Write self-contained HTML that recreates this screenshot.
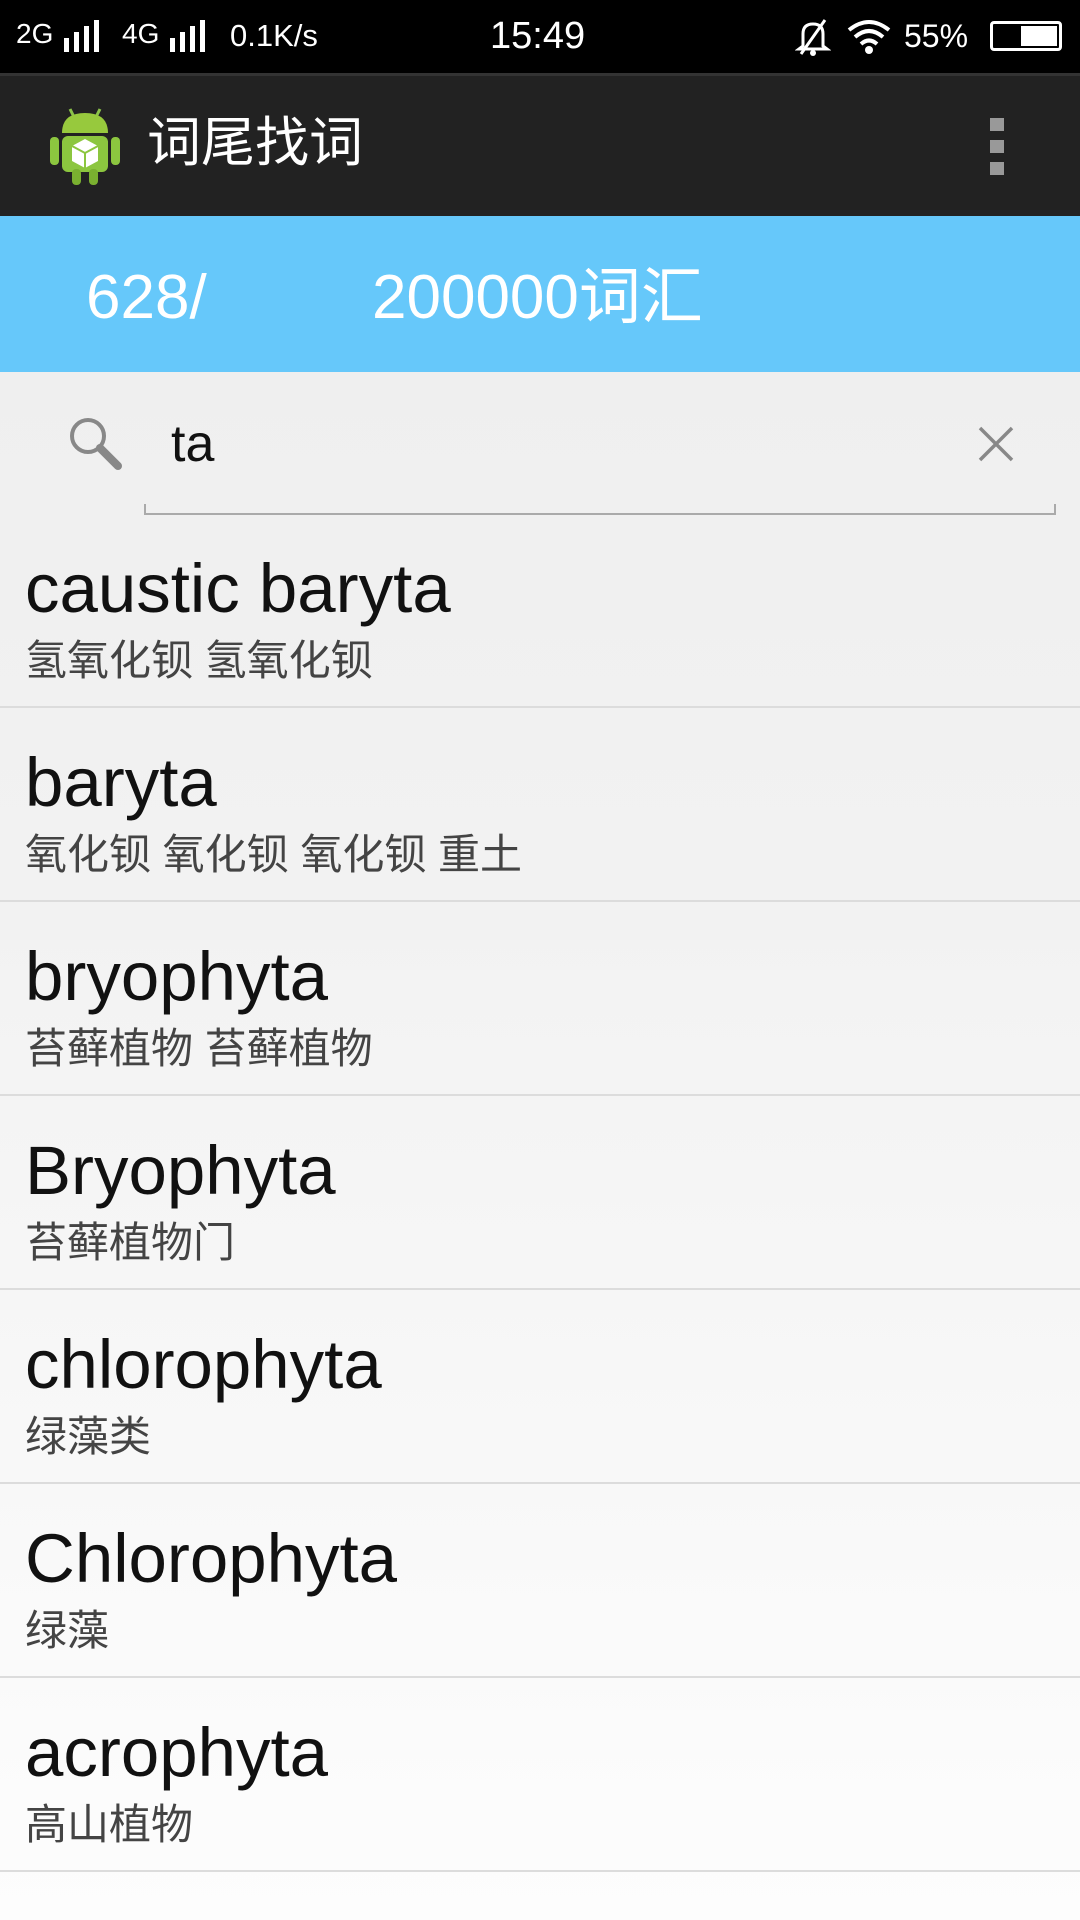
<!DOCTYPE html>
<html><head><meta charset="utf-8"><style>
*{margin:0;padding:0;box-sizing:border-box}
body{width:1080px;height:1920px;overflow:hidden;font-family:"Liberation Sans","Noto Sans CJK SC",sans-serif;background:linear-gradient(#efefef 370px,#f2f2f2 900px,#fdfdfd 1920px);position:relative}
.abs{position:absolute}
.sb{left:0;top:0;width:1080px;height:73px;background:#000;color:#fff;font-size:31px}
.ab{left:0;top:73px;width:1080px;height:143px;background:#222;border-top:3px solid #333}
.blue{left:0;top:216px;width:1080px;height:156px;background:#66c8fa;color:#fff;font-size:62px}
.blue span{line-height:1}
.row{position:absolute;left:0;width:1080px;height:194px;border-bottom:2px solid #dcdcdc}
.w{position:absolute;left:25px;top:40px;font-size:69px;color:#111;line-height:1}
.c{position:absolute;left:25px;top:126px;font-size:42px;color:#444;line-height:1;font-family:"Liberation Sans","Noto Sans CJK SC",sans-serif}
</style></head><body>
<div class="abs sb">
 <span class="abs" style="left:16px;top:18px;font-size:28px">2G</span>
 <svg class="abs" style="left:62px;top:20px" width="44" height="32"><rect x="2" y="18" width="5" height="14" fill="#fff"/><rect x="12" y="12" width="5" height="20" fill="#fff"/><rect x="22" y="6" width="5" height="26" fill="#fff"/><rect x="32" y="0" width="5" height="32" fill="#fff"/></svg>
 <span class="abs" style="left:122px;top:18px;font-size:28px">4G</span>
 <svg class="abs" style="left:168px;top:20px" width="44" height="32"><rect x="2" y="18" width="5" height="14" fill="#fff"/><rect x="12" y="12" width="5" height="20" fill="#fff"/><rect x="22" y="6" width="5" height="26" fill="#fff"/><rect x="32" y="0" width="5" height="32" fill="#fff"/></svg>
 <span class="abs" style="left:230px;top:18px;font-size:31px">0.1K/s</span>
 <span class="abs" style="left:490px;top:15px;font-size:38px">15:49</span>
 <svg class="abs" style="left:795px;top:18px" width="36" height="38"><path d="M8 28 L8 16 Q8 6 18 6 Q28 6 28 16 L28 28 L32 31 L4 31 Z" fill="none" stroke="#fff" stroke-width="3"/><path d="M30 2 L6 36" stroke="#fff" stroke-width="3"/><circle cx="18" cy="35" r="3" fill="#fff"/></svg>
 <svg class="abs" style="left:846px;top:18px" width="46" height="36"><path d="M3 12 Q23 -4 43 12" fill="none" stroke="#fff" stroke-width="4"/><path d="M9 19 Q23 7 37 19" fill="none" stroke="#fff" stroke-width="4"/><path d="M15 26 Q23 19 31 26" fill="none" stroke="#fff" stroke-width="4"/><circle cx="23" cy="32" r="4" fill="#fff"/></svg>
 <span class="abs" style="left:904px;top:18px;font-size:32px">55%</span>
 <div class="abs" style="left:990px;top:21px;width:72px;height:30px;border:3px solid #fff;border-radius:4px"><div style="position:absolute;right:2px;top:2px;width:36px;height:20px;background:#fff"></div></div>
</div>
<div class="abs ab">
 <svg class="abs" style="left:48px;top:27px" width="74" height="84" viewBox="0 0 74 84"><path d="M22 6 L26 14 M52 6 L48 14" stroke="#8bc34a" stroke-width="3"/><path d="M14 30 Q14 10 37 10 Q60 10 60 30 Z" fill="#97c93d"/><rect x="14" y="33" width="46" height="36" rx="6" fill="#8cc63f"/><rect x="2" y="34" width="9" height="28" rx="4" fill="#8cc63f"/><rect x="63" y="34" width="9" height="28" rx="4" fill="#8cc63f"/><rect x="24" y="66" width="9" height="16" rx="4" fill="#7ab030"/><rect x="41" y="66" width="9" height="16" rx="4" fill="#7ab030"/><path d="M37 36 L50 43 L50 58 L37 65 L24 58 L24 43 Z" fill="#fff"/><path d="M37 50 L37 65 M24 43 L37 50 L50 43" stroke="#8cc63f" stroke-width="2" fill="none"/></svg>
 <span class="abs" style="left:147px;top:40px;font-size:54px;color:#fff;line-height:1">词尾找词</span>
 <div class="abs" style="left:990px;top:42px;width:14px;height:13px;background:#999"></div>
 <div class="abs" style="left:990px;top:64px;width:14px;height:13px;background:#999"></div>
 <div class="abs" style="left:990px;top:86px;width:14px;height:13px;background:#999"></div>
</div>
<div class="abs blue">
 <span class="abs" style="left:86px;top:51px">628/</span>
 <span class="abs" style="left:372px;top:51px">200000词汇</span>
</div>
<svg class="abs" style="left:66px;top:414px" width="60" height="60"><circle cx="22" cy="22" r="16" fill="none" stroke="#888" stroke-width="4"/><path d="M34 34 L52 52" stroke="#888" stroke-width="8" stroke-linecap="round"/></svg>
<span class="abs" style="left:171px;top:414px;font-size:52px;color:#111">ta</span>
<svg class="abs" style="left:976px;top:424px" width="40" height="40"><path d="M4 4 L36 36 M36 4 L4 36" stroke="#888" stroke-width="3.5"/></svg>
<div class="abs" style="left:144px;top:504px;width:912px;height:11px;border:2px solid #aaa;border-top:none"></div>
<div class="row" style="top:514px"><div class="w">caustic baryta</div><div class="c">氢氧化钡 氢氧化钡</div></div>
<div class="row" style="top:708px"><div class="w">baryta</div><div class="c">氧化钡 氧化钡 氧化钡 重土</div></div>
<div class="row" style="top:902px"><div class="w">bryophyta</div><div class="c">苔藓植物 苔藓植物</div></div>
<div class="row" style="top:1096px"><div class="w">Bryophyta</div><div class="c">苔藓植物门</div></div>
<div class="row" style="top:1290px"><div class="w">chlorophyta</div><div class="c">绿藻类</div></div>
<div class="row" style="top:1484px"><div class="w">Chlorophyta</div><div class="c">绿藻</div></div>
<div class="row" style="top:1678px"><div class="w">acrophyta</div><div class="c">高山植物</div></div>
</body></html>
